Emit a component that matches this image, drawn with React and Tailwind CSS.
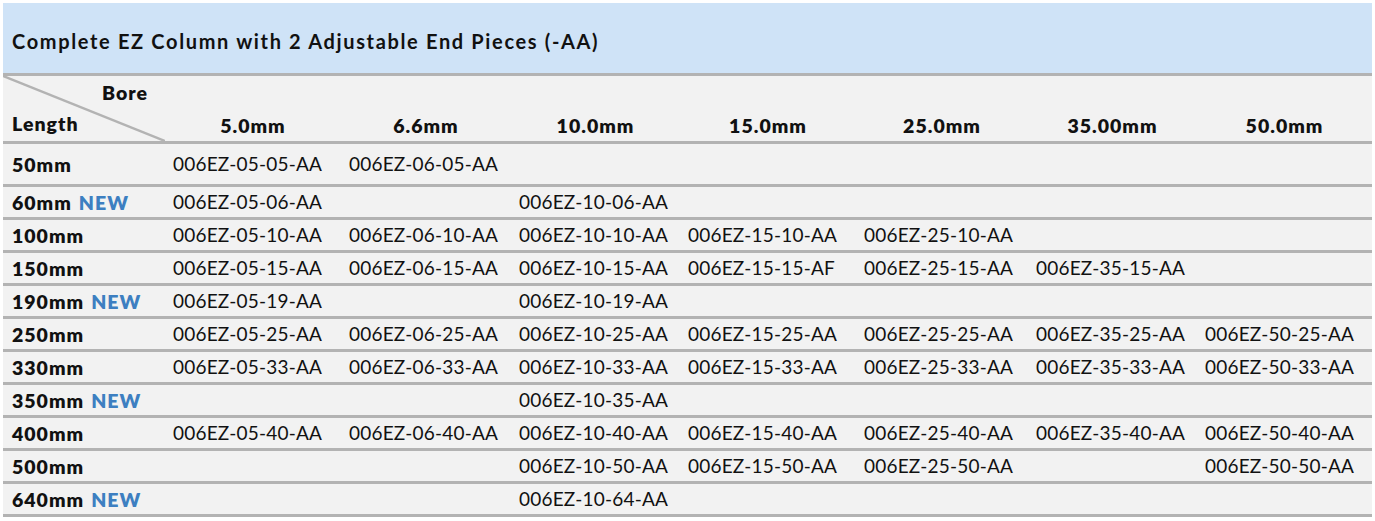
import React from 'react';

const bores = ['5.0mm', '6.6mm', '10.0mm', '15.0mm', '25.0mm', '35.00mm', '50.0mm'];

// each row: length label, isNew, part numbers per bore column ('' = empty)
const rows = [
  { len: '50mm', isNew: false, tall: true, parts: ['006EZ-05-05-AA', '006EZ-06-05-AA', '', '', '', '', ''] },
  { len: '60mm', isNew: true, parts: ['006EZ-05-06-AA', '', '006EZ-10-06-AA', '', '', '', ''] },
  { len: '100mm', isNew: false, parts: ['006EZ-05-10-AA', '006EZ-06-10-AA', '006EZ-10-10-AA', '006EZ-15-10-AA', '006EZ-25-10-AA', '', ''] },
  { len: '150mm', isNew: false, parts: ['006EZ-05-15-AA', '006EZ-06-15-AA', '006EZ-10-15-AA', '006EZ-15-15-AF', '006EZ-25-15-AA', '006EZ-35-15-AA', ''] },
  { len: '190mm', isNew: true, parts: ['006EZ-05-19-AA', '', '006EZ-10-19-AA', '', '', '', ''] },
  { len: '250mm', isNew: false, parts: ['006EZ-05-25-AA', '006EZ-06-25-AA', '006EZ-10-25-AA', '006EZ-15-25-AA', '006EZ-25-25-AA', '006EZ-35-25-AA', '006EZ-50-25-AA'] },
  { len: '330mm', isNew: false, parts: ['006EZ-05-33-AA', '006EZ-06-33-AA', '006EZ-10-33-AA', '006EZ-15-33-AA', '006EZ-25-33-AA', '006EZ-35-33-AA', '006EZ-50-33-AA'] },
  { len: '350mm', isNew: true, parts: ['', '', '006EZ-10-35-AA', '', '', '', ''] },
  { len: '400mm', isNew: false, parts: ['006EZ-05-40-AA', '006EZ-06-40-AA', '006EZ-10-40-AA', '006EZ-15-40-AA', '006EZ-25-40-AA', '006EZ-35-40-AA', '006EZ-50-40-AA'] },
  { len: '500mm', isNew: false, parts: ['', '', '006EZ-10-50-AA', '006EZ-15-50-AA', '006EZ-25-50-AA', '', '006EZ-50-50-AA'] },
  { len: '640mm', isNew: true, parts: ['', '', '006EZ-10-64-AA', '', '', '', ''] },
];

const cols = 'grid grid-cols-[162px_176px_170px_169px_176px_172px_169px_175px]';

export default function App() {
  return (
    <div className="bg-white w-[1375px] h-[521px] pt-[3px] pl-[3px] font-['Lato',sans-serif] text-[#111]">
      <div className="w-[1369px] bg-[#f2f2f2]">
        {/* Title */}
        <div className="h-[73px] bg-[#cfe3f7] border-b-[3px] border-[#b3b3b3] flex items-center pl-[9px] pt-[6px] text-[20px] font-bold tracking-[1.65px]">
          Complete EZ Column with 2 Adjustable End Pieces (-AA)
        </div>

        {/* Header row */}
        <div className={`${cols} h-[68px] border-b-[3px] border-[#b3b3b3]`}>
          <div className="relative">
            <svg className="absolute inset-0" width="162" height="65" viewBox="0 0 162 65">
              <line x1="0" y1="0" x2="162" y2="65" stroke="#b3b3b3" strokeWidth="2.5" />
            </svg>
            <div className="absolute left-[99px] top-[2px] text-[19.5px] font-extrabold tracking-[1px]">Bore</div>
            <div className="absolute left-[9px] top-[33px] text-[19.5px] font-extrabold tracking-[1px]">Length</div>
          </div>
          {bores.map(b => (
            <div key={b} className="flex items-end justify-center pb-[1px] text-[19.5px] font-extrabold tracking-[1px]">{b}</div>
          ))}
        </div>

        {/* Data rows */}
        {rows.map(r => (
          <div key={r.len} className={`${cols} ${r.tall ? 'h-[43px]' : 'h-[33px]'} border-b-[3px] border-[#b3b3b3] items-center pt-[1px]`}>
            <div className="pl-[9px] text-[19.5px] font-extrabold tracking-[1px]">
              {r.len}
              {r.isNew && <span className="ml-[7px] text-[#3d7fc1]">NEW</span>}
            </div>
            {r.parts.map((p, i) => (
              <div key={i} className="pl-[8px] text-[19px] tracking-[0.2px]">{p}</div>
            ))}
          </div>
        ))}
      </div>
    </div>
  );
}
